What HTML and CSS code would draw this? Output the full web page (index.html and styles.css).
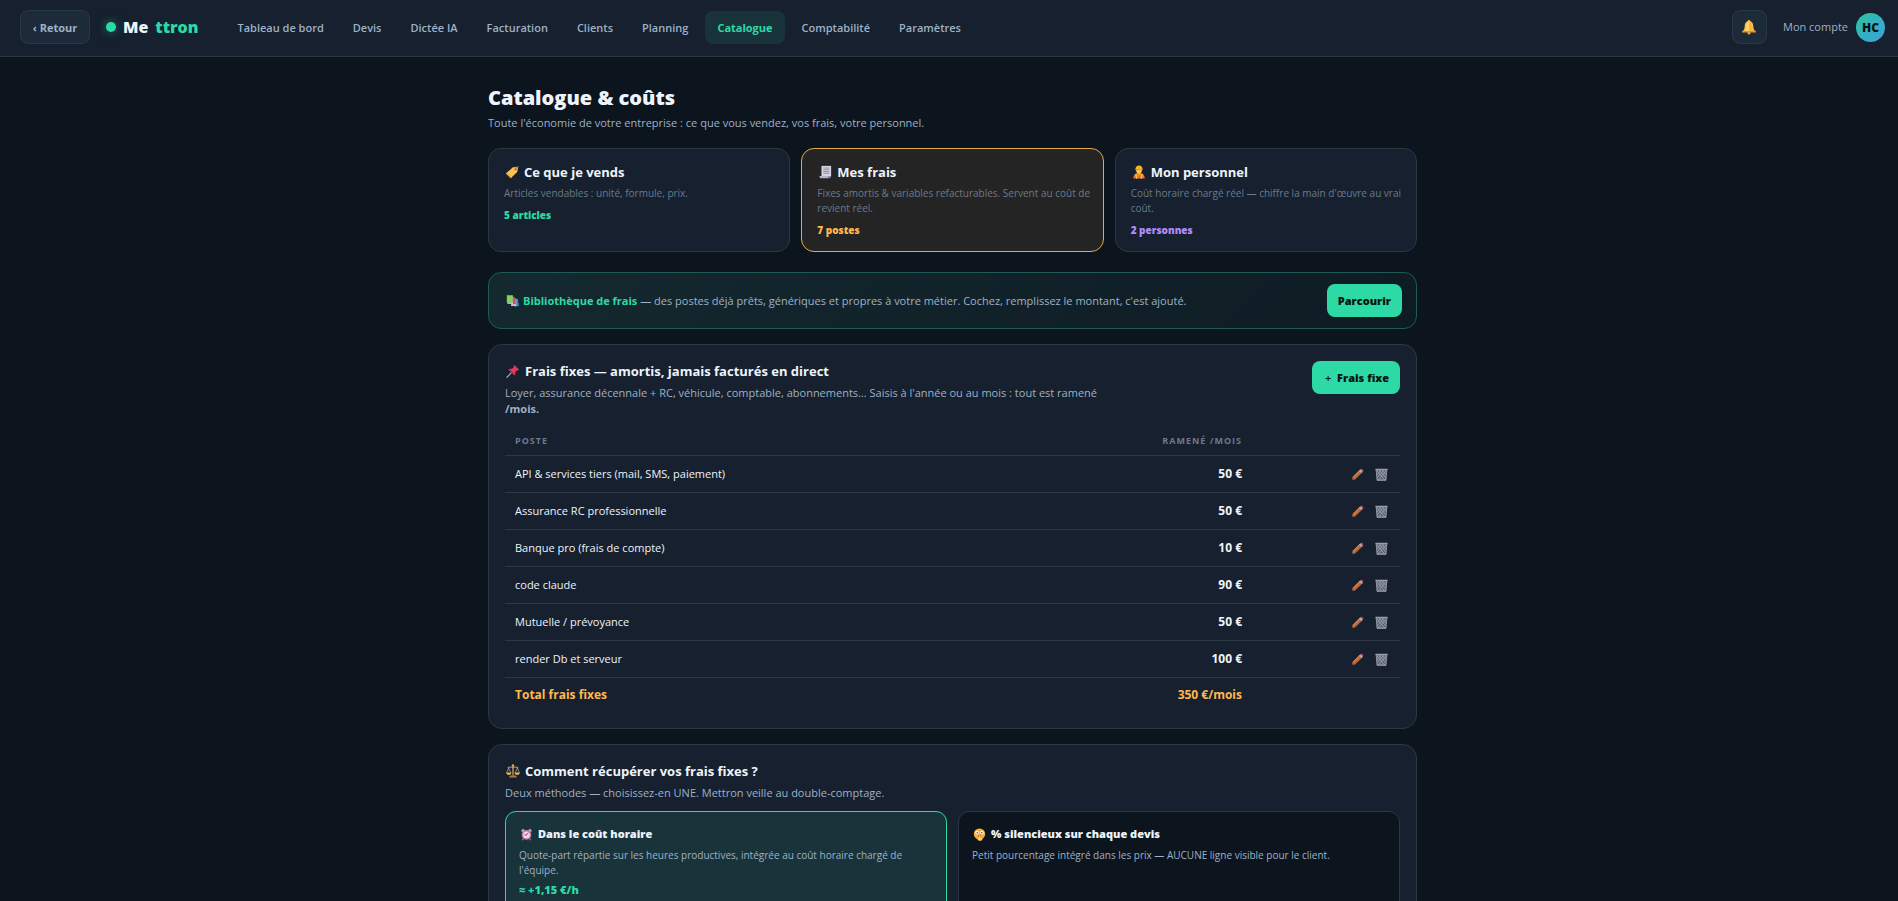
FILE: index.html
```html
<!DOCTYPE html>
<html lang="fr">
  <head>
    <meta charset="UTF-8" />
    <meta name="viewport" content="width=device-width, initial-scale=1.0" />
    <title>Mettron - Catalogue & coûts</title>
    <link rel="stylesheet" href="styles.css">
  </head>
  <body>
    <!-- Icons -->
    <svg class="sprite" aria-hidden="true">
      <symbol id="i-bell" viewBox="0 0 16 16">
        <path d="M8 1a1.4 1.4 0 0 1 1.4 1.3C11.6 3 12.3 5 12.4 7.500c.1 2.500.8 3.500 2.600 5.500H1c1.800-2 2.500-3 2.600-5.500C3.700 5 4.400 3 6.600 2.300A1.400 1.400 0 0 1 8 1z" fill="#fcb43f" />
        <path d="M8 2.500c-2 .3-3 2-3 5 0 2-.5 3.500-1.500 4.500H8z" fill="#ffd56b" />
        <path d="M1 12h14v1.500H1z" fill="#e8912c" />
        <circle cx="8" cy="14" r="1.600" fill="#e9a03a" />
      </symbol>
      <symbol id="i-tag" viewBox="0 0 16 16">
        <path d="M9 2.500l4.800-.3 1 1.200-.8 4.600-7.500 7L1 9.800z" fill="#fcc14c" />
        <path d="M6.500 15L1 9.800l1-.8 6 5.200z" fill="#e5972c" />
        <circle cx="12" cy="4.800" r="1.200" fill="#8b5a2b" />
        <path d="M12 4.800Q13 1 15.500 2.200" fill="none" stroke="#a78c7c" stroke-width="1" />
      </symbol>
      <symbol id="i-receipt" viewBox="0 0 16 16">
        <path d="M4 1h11v12H4z" fill="#d8d3e2" />
        <path d="M1.500 12.500H12V15H2.500z" fill="#b9b1c8" />
        <path d="M12 12.500h3L13.500 15H12z" fill="#958da8" />
        <path d="M6 3.500h7M6 5.500h7M6 7.500h7M6 9.500h7" stroke="#8e879f" stroke-width="1" />
      </symbol>
      <symbol id="i-worker" viewBox="0 0 16 16">
        <path d="M1.500 15.500c0-4 2-5.500 4.500-6h4c2.500.5 4.500 2 4.500 6z" fill="#e8742c" />
        <path d="M4.500 10l1 5.500M11.500 10l-1 5.500" stroke="#ffc04a" stroke-width="1.500" />
        <path d="M6.300 8h3.400v3L8 12.300 6.300 11z" fill="#f0a030" />
        <ellipse cx="8" cy="5.800" rx="3.300" ry="4" fill="#ffc83d" />
        <path d="M3.800 5.500C4 1.500 6 .5 8 .5s4 1 4.200 5z" fill="#f7b52b" />
        <path d="M3.500 5.200h9" stroke="#d98a24" stroke-width=".8" />
      </symbol>
      <symbol id="i-books" viewBox="0 0 16 16">
        <path d="M8.500 5l6 1 1.200 8.500-5 1.200z" fill="#5aa9e6" />
        <path d="M13.800 6l1.900 8.500-2 .5-1-8.500z" fill="#3d7fc4" />
        <path d="M5.500 3.500h5l1.300 9.500-5 .5z" fill="#e0446c" />
        <path d="M6 13l5.800-.5.200 1.500-5.500.8z" fill="#f2e8ee" />
        <path d="M1 1.500h7.500v9H1z" fill="#7ed35c" />
        <path d="M1 10.500h7.500V12H2z" fill="#d9f0cf" />
      </symbol>
      <symbol id="i-pin" viewBox="0 0 16 16">
        <path d="M6.500 9.500L1 15.200" stroke="#a9b0bd" stroke-width="1.300" stroke-linecap="round" />
        <path d="M9.500 1l5.500 5.500-1.700.8-.8-.3-2 2.300c.5 1.700.2 2.900-.7 3.900L2.600 6.300c1.200-1 2.400-1.200 4-.7L9 3.500 8.700 2.300z" fill="#e8375f" />
        <path d="M2.600 6.300l7.200 6.900.6-1L3.800 5.700z" fill="#b8224a" />
      </symbol>
      <symbol id="i-pencil" viewBox="0 0 16 16">
        <path d="M1 15l.9-4L10.500 2.500l3.200 3.200L5 14.200z" fill="#b9653a" />
        <path d="M2 11l8.500-8.500 1.300 1.300-8.300 8.400z" fill="#cf7d4c" />
        <path d="M1 15l.5-2.200 1.800 1.700z" fill="#5b3a33" />
        <path d="M10 3l1.500-1.500 3.200 3.200L13.200 6.200z" fill="#b9b4c6" />
        <path d="M11.500 1.500c1-1 2-.9 2.800-.1s1 2 .4 3.300z" fill="#c24c60" />
      </symbol>
      <symbol id="i-trash" viewBox="0 0 16 16">
        <path d="M1 2h14l-1.200 13.500H2.200z" fill="#5d6376" />
        <path d="M2 3l10 12M5.500 3l8 9.500M9 3l5 6M14 3L4 15M10.500 3L2.500 12.500M7 3L2 9" stroke="#a5a9bb" stroke-width=".9" />
        <path d="M1.500 3l1.200 12M14.500 3l-1.200 12" stroke="#8f94a7" stroke-width="1.200" />
        <path d="M.500.800h15v2H.500zM2.300 14.200h11.400v1.500H2.300z" fill="#9a9eb0" />
      </symbol>
      <symbol id="i-scale" viewBox="0 0 16 16">
        <path d="M7.200 2h1.600v11H7.200z" fill="#c99a4d" />
        <circle cx="8" cy="1.700" r="1.400" fill="#d8a957" />
        <path d="M2 4.500Q5 2.500 8 4.300q3-1.800 6 .2" fill="none" stroke="#c99a4d" stroke-width="1.300" />
        <path d="M3 4.500L.8 10M3 4.500L5.500 10M13 4.500L10.500 10M13 4.500L15.200 10" stroke="#b3b6c2" stroke-width=".8" />
        <path d="M.2 9.800h6C6 12 4.500 12.600 3.200 12.600S.5 12 .2 9.800zM9.800 9.800h6c-.3 2.200-1.700 2.800-3 2.800s-2.800-.6-3-2.800z" fill="#f2b04a" />
        <path d="M4.500 13h7l1 2.500h-9z" fill="#a97b46" />
      </symbol>
      <symbol id="i-clock" viewBox="0 0 16 16">
        <path d="M4.200 13L3 15M11.800 13l1.200 2" stroke="#9b8fa6" stroke-width="1.400" />
        <circle cx="3.800" cy="3.300" r="2.100" fill="#b8a4bd" />
        <circle cx="12.200" cy="3.300" r="2.100" fill="#b8a4bd" />
        <circle cx="8" cy="8.500" r="6" fill="#b87d9c" />
        <circle cx="8" cy="8.500" r="4.200" fill="#e6d9ea" />
        <path d="M8 8.500l2-2.500M8 8.500H5.800" stroke="#c83a64" stroke-width="1.200" stroke-linecap="round" />
      </symbol>
      <symbol id="i-shush" viewBox="0 0 16 16">
        <circle cx="8" cy="7.500" r="7" fill="#fbb03f" />
        <circle cx="5" cy="5.500" r="2.100" fill="#fff" />
        <circle cx="11" cy="5.500" r="2.100" fill="#fff" />
        <circle cx="5.200" cy="5.700" r=".9" fill="#4a3030" />
        <circle cx="10.800" cy="5.700" r=".9" fill="#4a3030" />
        <path d="M6 10h4" stroke="#7a3b20" stroke-width="1" />
        <path d="M7.300 8.500q.9-1 1.500 0l.2 2.700 2.600.3q.8 3-1.600 4.300H7q-2-1.300-1-4l1.200-.5z" fill="#ffd070" stroke="#d57a2a" stroke-width=".6" />
      </symbol>
    </svg>

    <header class="topbar">
      <button type="button" class="btn-back">‹ Retour</button>
      <a href="#" class="logo"><span class="logo-dot"></span>Me<span class="logo-accent">ttron</span></a>
      <nav>
        <a href="#">Tableau de bord</a>
        <a href="#">Devis</a>
        <a href="#">Dictée IA</a>
        <a href="#">Facturation</a>
        <a href="#">Clients</a>
        <a href="#">Planning</a>
        <a href="#" class="active">Catalogue</a>
        <a href="#">Comptabilité</a>
        <a href="#">Paramètres</a>
      </nav>
      <div class="account">
        <button type="button" class="btn-bell" aria-label="Notifications"><svg class="icon"><use href="#i-bell" /></svg></button>
        <a href="#" class="account-link">Mon compte <span class="avatar">HC</span></a>
      </div>
    </header>

    <main>
      <h1>Catalogue &amp; coûts</h1>
      <p class="subtitle">Toute l'économie de votre entreprise : ce que vous vendez, vos frais, votre personnel.</p>

      <div class="tabs">
        <a href="#" class="tab">
          <h2><svg class="icon"><use href="#i-tag" /></svg>Ce que je vends</h2>
          <p>Articles vendables : unité, formule, prix.</p>
          <strong class="green">5 articles</strong>
        </a>
        <a href="#" class="tab tab-active">
          <h2><svg class="icon"><use href="#i-receipt" /></svg>Mes frais</h2>
          <p>Fixes amortis &amp; variables refacturables. Servent au coût de revient réel.</p>
          <strong class="amber">7 postes</strong>
        </a>
        <a href="#" class="tab">
          <h2><svg class="icon"><use href="#i-worker" /></svg>Mon personnel</h2>
          <p>Coût horaire chargé réel — chiffre la main d'œuvre au vrai coût.</p>
          <strong class="purple">2 personnes</strong>
        </a>
      </div>

      <div class="library">
        <p><svg class="icon icon-small"><use href="#i-books" /></svg><strong>Bibliothèque de frais</strong> — des postes déjà prêts, génériques et propres à votre métier. Cochez, remplissez le montant, c'est ajouté.</p>
        <button type="button" class="btn">Parcourir</button>
      </div>

      <section class="card">
        <div class="card-head">
          <div class="card-intro">
            <h2><svg class="icon"><use href="#i-pin" /></svg>Frais fixes — amortis, jamais facturés en direct</h2>
            <p>Loyer, assurance décennale + RC, véhicule, comptable, abonnements… Saisis à l'année ou au mois : tout est ramené <b>/mois.</b></p>
          </div>
          <button type="button" class="btn"><span class="plus">+</span> Frais fixe</button>
        </div>
        <table>
          <thead>
            <tr><th>Poste</th><th class="num">Ramené /mois</th><th class="actions"></th></tr>
          </thead>
          <tbody>
            <tr>
              <td>API &amp; services tiers (mail, SMS, paiement)</td>
              <td class="num">50 €</td>
              <td class="actions"><button type="button" aria-label="Modifier"><svg class="icon"><use href="#i-pencil" /></svg></button><button type="button" aria-label="Supprimer"><svg class="icon"><use href="#i-trash" /></svg></button></td>
            </tr>
            <tr>
              <td>Assurance RC professionnelle</td>
              <td class="num">50 €</td>
              <td class="actions"><button type="button" aria-label="Modifier"><svg class="icon"><use href="#i-pencil" /></svg></button><button type="button" aria-label="Supprimer"><svg class="icon"><use href="#i-trash" /></svg></button></td>
            </tr>
            <tr>
              <td>Banque pro (frais de compte)</td>
              <td class="num">10 €</td>
              <td class="actions"><button type="button" aria-label="Modifier"><svg class="icon"><use href="#i-pencil" /></svg></button><button type="button" aria-label="Supprimer"><svg class="icon"><use href="#i-trash" /></svg></button></td>
            </tr>
            <tr>
              <td>code claude</td>
              <td class="num">90 €</td>
              <td class="actions"><button type="button" aria-label="Modifier"><svg class="icon"><use href="#i-pencil" /></svg></button><button type="button" aria-label="Supprimer"><svg class="icon"><use href="#i-trash" /></svg></button></td>
            </tr>
            <tr>
              <td>Mutuelle / prévoyance</td>
              <td class="num">50 €</td>
              <td class="actions"><button type="button" aria-label="Modifier"><svg class="icon"><use href="#i-pencil" /></svg></button><button type="button" aria-label="Supprimer"><svg class="icon"><use href="#i-trash" /></svg></button></td>
            </tr>
            <tr>
              <td>render Db et serveur</td>
              <td class="num">100 €</td>
              <td class="actions"><button type="button" aria-label="Modifier"><svg class="icon"><use href="#i-pencil" /></svg></button><button type="button" aria-label="Supprimer"><svg class="icon"><use href="#i-trash" /></svg></button></td>
            </tr>
          </tbody>
          <tfoot>
            <tr><td>Total frais fixes</td><td class="num">350 €/mois</td><td></td></tr>
          </tfoot>
        </table>
      </section>

      <section class="card">
        <h2><svg class="icon"><use href="#i-scale" /></svg>Comment récupérer vos frais fixes ?</h2>
        <p>Deux méthodes — choisissez-en UNE. Mettron veille au double-comptage.</p>
        <div class="methods">
          <a href="#" class="method method-active">
            <h3><svg class="icon icon-small"><use href="#i-clock" /></svg>Dans le coût horaire</h3>
            <p>Quote-part répartie sur les heures productives, intégrée au coût horaire chargé de l'équipe.</p>
            <strong class="green">≈ +1,15 €/h</strong>
          </a>
          <a href="#" class="method">
            <h3><svg class="icon icon-small"><use href="#i-shush" /></svg>% silencieux sur chaque devis</h3>
            <p>Petit pourcentage intégré dans les prix — AUCUNE ligne visible pour le client.</p>
          </a>
        </div>
      </section>
    </main>
  </body>
</html>
```

FILE: styles.css
```css
/* General */
* {
  box-sizing: border-box;
}

body {
  margin: 0;
  background: #0c141e;
  color: #eef4fb;
  font-family: "Open Sans", "Noto Sans", sans-serif;
  font-size: 11px;
  line-height: 16px;
}

h1,
h2,
h3,
p {
  margin: 0;
}

a {
  color: inherit;
  text-decoration: none;
}

button {
  font-family: inherit;
  cursor: pointer;
}

.sprite {
  display: none;
}

.icon {
  width: 14px;
  height: 14px;
  flex: none;
}

.icon-small {
  width: 13px;
  height: 13px;
}

.green {
  color: #2ddaa6;
}

.amber {
  color: #ffb84d;
}

.purple {
  color: #b18cf8;
}

/* Top bar */
.topbar {
  display: flex;
  align-items: center;
  height: 57px;
  padding: 0 13px 2px 20px;
  background: #16202e;
  border-bottom: 1px solid #2a3846;
}

.btn-back,
.btn-bell {
  height: 34px;
  background: #1d2a3a;
  border: 1px solid #2a3846;
  border-radius: 8px;
}

.btn-back {
  width: 70px;
  padding: 0;
  color: #9fb1c6;
  font-size: 11px;
  font-weight: 700;
}

.logo {
  display: flex;
  align-items: center;
  gap: 7px;
  margin-left: 16px;
  font-size: 16px;
  font-weight: 800;
}

.logo-dot {
  width: 10px;
  height: 10px;
  border-radius: 50%;
  background: #2ddaa6;
  box-shadow: 0 0 10px #2ddaa680;
}

.logo-accent {
  color: #2ddaa6;
}

nav {
  display: flex;
  gap: 5px;
  margin-left: 27px;
}

nav a {
  padding: 9px 12px 8px;
  border-radius: 8px;
  color: #9fb1c6;
  font-weight: 600;
}

nav .active {
  background: #19333a;
  color: #2ddaa6;
  font-weight: 700;
}

.account {
  display: flex;
  align-items: center;
  gap: 16px;
  margin-left: auto;
}

.btn-bell {
  display: flex;
  align-items: center;
  justify-content: center;
  width: 35px;
  padding: 0;
}

.btn-bell .icon {
  width: 16px;
  height: 16px;
}

.account-link {
  display: flex;
  align-items: center;
  gap: 8px;
  color: #9fb1c6;
}

.avatar {
  width: 29px;
  border-radius: 50%;
  background: linear-gradient(135deg, #2bc4a0, #3d9fe0);
  color: #06140f;
  font-size: 12px;
  font-weight: 800;
  line-height: 29px;
  text-align: center;
}

/* Page */
main {
  max-width: 936px;
  margin: 0 auto;
  padding: 27px 0 40px 7px;
}

h1 {
  font-size: 20px;
  font-weight: 800;
  line-height: 28px;
}

.subtitle {
  margin-top: 3px;
  color: #9fb1c6;
}

h2 {
  display: flex;
  align-items: center;
  gap: 5px;
  font-size: 13px;
  font-weight: 700;
  line-height: 20px;
}

h2 .icon {
  margin-left: 1px;
}

/* Tabs */
.tabs {
  display: grid;
  grid-template-columns: repeat(3, 1fr);
  gap: 11px;
  margin-top: 17px;
}

.tab {
  padding: 13px 8px 13px 15px;
  background: #16202e;
  border: 1px solid #2a3846;
  border-radius: 13px;
}

.tab p {
  margin: 4px 0 6px;
  color: #6b7a8d;
  font-size: 10px;
  line-height: 15px;
}

.tab strong {
  display: block;
  font-size: 10px;
  font-weight: 800;
}

.tab-active {
  background: #242424;
  border-color: #e0ab4e;
}

/* Library banner */
.library {
  display: flex;
  align-items: center;
  justify-content: space-between;
  margin-top: 20px;
  padding: 11px 14px 11px 17px;
  background: linear-gradient(135deg, #14292f, #0f1b24);
  border: 1px solid #1f5a55;
  border-radius: 13px;
}

.library p {
  color: #9fb1c6;
}

.library .icon {
  margin-right: 4px;
  vertical-align: -2px;
}

.library strong {
  color: #2ddaa6;
  font-weight: 700;
}

.btn {
  height: 33px;
  padding: 0 11px;
  background: #2ddaa6;
  border: 0;
  border-radius: 8px;
  color: #06140f;
  font-size: 11px;
  font-weight: 800;
}

.plus {
  margin: 0 3px 0 2px;
  font-weight: 600;
}

/* Cards */
.card {
  margin-top: 15px;
  padding: 16px;
  background: #16202e;
  border: 1px solid #2a3846;
  border-radius: 14px;
}

.card p {
  margin-top: 4px;
  color: #9fb1c6;
}

.card-head {
  display: flex;
  align-items: flex-start;
  justify-content: space-between;
}

.card-intro {
  max-width: 612px;
}

/* Table */
table {
  width: 100%;
  margin-top: 10px;
  border-collapse: collapse;
}

th {
  height: 28px;
  padding: 0 10px;
  border-bottom: 1px solid #2a3846;
  color: #6b7a8d;
  font-size: 9px;
  font-weight: 700;
  letter-spacing: 1px;
  text-align: left;
  text-transform: uppercase;
}

td {
  height: 37px;
  padding: 0 10px;
  border-bottom: 1px solid #2a3846;
}

.num {
  text-align: right;
}

td.num {
  font-size: 12px;
  font-weight: 700;
}

.actions {
  width: 148px;
  padding-right: 12px;
  text-align: right;
}

.actions button {
  padding: 0;
  margin-left: 11px;
  background: none;
  border: 0;
  vertical-align: middle;
}

.actions .icon {
  display: block;
  width: 13px;
  height: 13px;
}

tfoot td {
  height: 35px;
  border-bottom: 0;
  color: #ffb84d;
  font-size: 12px;
  font-weight: 700;
}

/* Methods */
.methods {
  display: grid;
  grid-template-columns: 1fr 1fr;
  gap: 11px;
  margin-top: 10px;
}

.method {
  padding: 13px;
  background: #0c141e;
  border: 1px solid #2a3846;
  border-radius: 11px;
}

.method-active {
  background: #19333a;
  border-color: #2ddaa6;
}

h3 {
  display: flex;
  align-items: center;
  gap: 5px;
  font-size: 11px;
  font-weight: 800;
  line-height: 18px;
}

h3 .icon {
  margin-left: 1px;
}

.method p {
  margin: 5px 0 4px;
  font-size: 10px;
  line-height: 15px;
}

.method strong {
  display: block;
  font-size: 11px;
  font-weight: 800;
}
```
